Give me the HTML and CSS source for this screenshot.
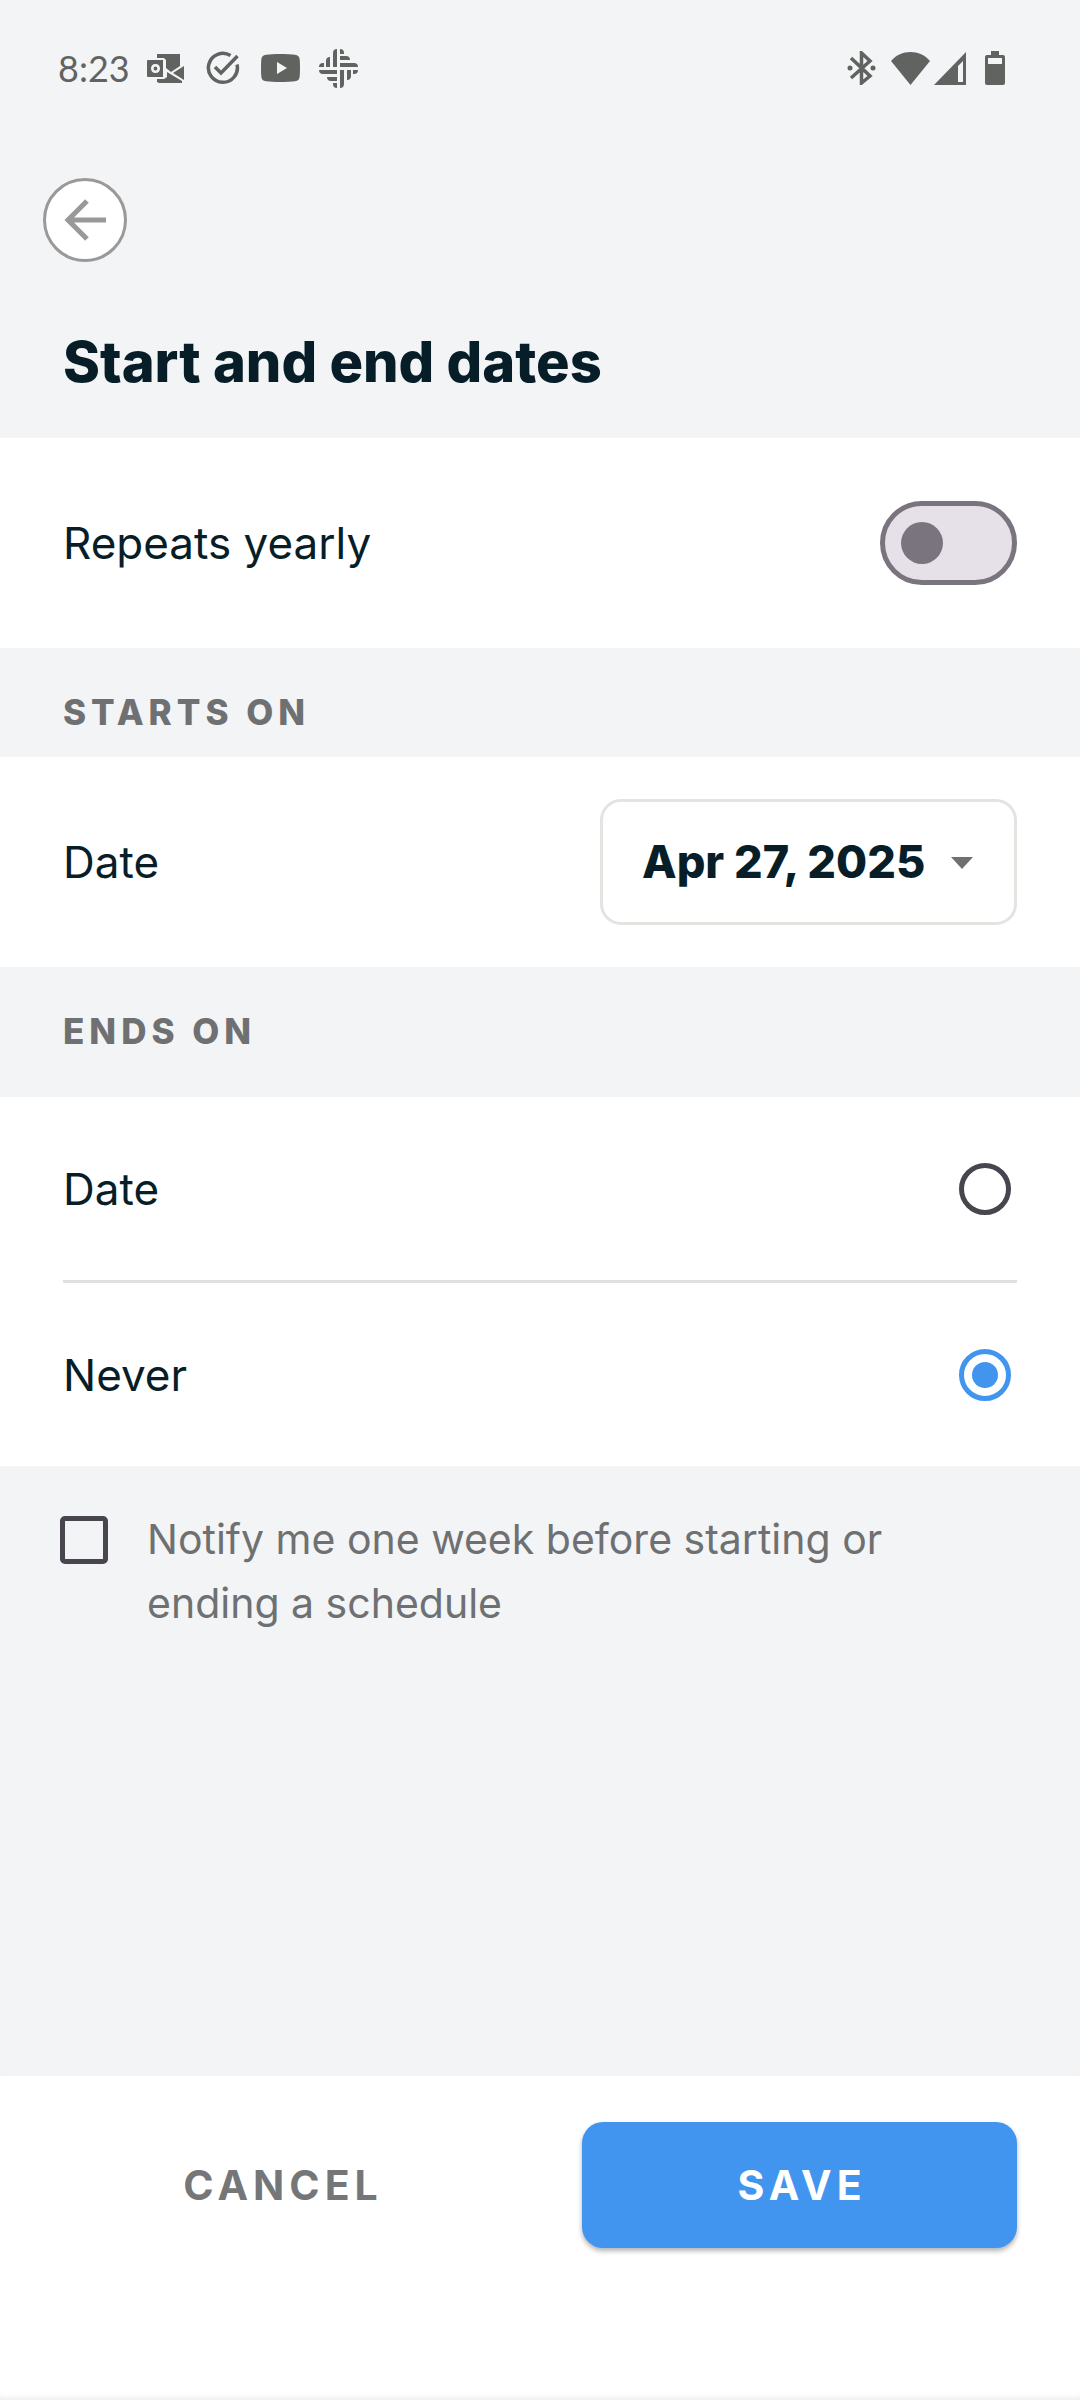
FILE: index.html
```
<!DOCTYPE html>
<html lang="en">
<head>
  <meta charset="utf-8">
  <meta name="viewport" content="width=device-width, initial-scale=1">
  <title>Start and end dates</title>
  <link rel="stylesheet" href="styles.css">
</head>
<body>
  <div class="screen">
    <div class="status-bar">
      <div class="status-group">
        <span class="clock">8:23</span>
        <svg class="icon-outlook" width="37" height="29" viewBox="0 0 37 29">
          <path d="M10 0h23v12l-9 6-5-4V6l-2-2h-7zM10 25h7l3-2v-5l15 9v2H12l-2-1z"/>
          <path d="M37 12v14l-11-7z"/>
          <path fill-rule="evenodd" d="M1 6h15v17H1a1 1 0 0 1-1-1V7a1 1 0 0 1 1-1zM8.500 10c-3 0-4.500 2-4.500 4.500S5.500 19 8.500 19s4.500-2 4.500-4.500S11.500 10 8.500 10zm0 2.500c1.300 0 1.800 1 1.800 2s-.5 2-1.800 2-1.800-1-1.800-2 .5-2 1.800-2z"/>
        </svg>
        <svg class="icon-task" width="34" height="34" viewBox="0 0 34 34" fill="none" stroke="#616361" stroke-width="3.500">
          <path d="M24.500 4.500A14.500 14.500 0 1 0 31 13.500"/>
          <path d="M9 16l6 6L31.500 5"/>
        </svg>
        <svg class="icon-video" width="39" height="28" viewBox="0 0 39 28">
          <path fill-rule="evenodd" d="M5 .7C12-.2 27-.2 34 .7c3 .3 4.400 1.800 4.700 4.800.4 5 .4 12 0 17-.3 3-1.700 4.500-4.700 4.800-7 .9-22 .9-29 0-3-.3-4.400-1.800-4.700-4.800-.4-5-.4-12 0-17C.6 2.500 2 1 5 .7zM16 8v12l10-6z"/>
        </svg>
        <svg class="icon-slack" width="39" height="39" viewBox="0 0 39 39">
          <g id="arm">
            <path d="M14 4a4 4 0 0 1 4-4v18h-4zM7 12a4 4 0 0 1 4-4v10H7zM0 18a4 4 0 0 1 4-4h1v4z"/>
          </g>
          <use href="#arm" transform="rotate(90 19.500 19.500)"/>
          <use href="#arm" transform="rotate(180 19.500 19.500)"/>
          <use href="#arm" transform="rotate(270 19.500 19.500)"/>
        </svg>
      </div>
      <div class="status-group">
        <svg class="icon-bluetooth" width="29" height="34" viewBox="0 0 29 34">
          <path d="M4 7l19 18-8.500 7V2L23 10 4 27" fill="none" stroke="#616361" stroke-width="3.500"/>
          <circle cx="3" cy="17" r="2.500"/>
          <circle cx="26" cy="17" r="2.500"/>
        </svg>
        <svg class="icon-wifi" width="39" height="33" viewBox="0 0 39 33">
          <path d="M0 9C5 3 12 0 19.500 0S34 3 39 9L19.500 33z"/>
        </svg>
        <svg class="icon-signal" width="32" height="33" viewBox="0 0 32 33">
          <path fill-rule="evenodd" d="M32 0v33H0zM29 9l-5 5v16h5z"/>
        </svg>
        <svg class="icon-battery" width="20" height="34" viewBox="0 0 20 34">
          <path fill-rule="evenodd" d="M6 0h8v4h4a2 2 0 0 1 2 2v26a2 2 0 0 1-2 2H2a2 2 0 0 1-2-2V6a2 2 0 0 1 2-2h4zM3 7v6h14V7z"/>
        </svg>
      </div>
    </div>

    <header class="header">
      <button class="back" type="button" aria-label="Back">
        <svg width="42" height="42" viewBox="0 0 42 42" fill="none" stroke="#999" stroke-width="5">
          <path d="M42 21H4M23 2L4 21l19 19"/>
        </svg>
      </button>
      <h1>Start and end dates</h1>
    </header>

    <form class="form">
      <div class="row">
        <label for="repeats">Repeats yearly</label>
        <input class="switch" id="repeats" type="checkbox" role="switch">
      </div>

      <h2 class="section-title">Starts on</h2>
      <div class="row">
        <label for="start">Date</label>
        <div class="select">
          <select id="start">
            <option>Apr 27, 2025</option>
          </select>
          <svg width="22" height="12" viewBox="0 0 22 12">
            <path d="M0 0h22L11 12z"/>
          </svg>
        </div>
      </div>

      <h2 class="section-title section-title-tall">Ends on</h2>
      <div class="options">
        <div class="option">
          <label for="end-date">Date</label>
          <input class="radio" id="end-date" type="radio" name="end">
        </div>
        <div class="option">
          <label for="end-never">Never</label>
          <input class="radio" id="end-never" type="radio" name="end" checked>
        </div>
      </div>

      <div class="notify">
        <input class="checkbox" id="notify" type="checkbox">
        <label for="notify">Notify me one week before starting or ending a schedule</label>
      </div>

      <div class="footer">
        <button class="btn" type="button">Cancel</button>
        <button class="btn btn-primary" type="submit">Save</button>
      </div>
    </form>
  </div>
</body>
</html>
```
FILE: styles.css
```
:root {
  --primary: #4295ef;
  --text: #071e29;
  --text-secondary: #6f7072;
  --status: #616361;
  --outline: #48454e;
  --background: #ffffff;
  --background-alt: #f3f4f6;
  --border: #e3e4e0;
}

* {
  margin: 0;
  padding: 0;
  box-sizing: border-box;
}

body {
  font-family: Inter, 'Liberation Sans', sans-serif;
  font-size: 44px;
  line-height: 64px;
  color: var(--text);
  background: var(--background-alt);
}

button,
select {
  font: inherit;
}

.screen {
  display: flex;
  flex-direction: column;
  min-height: 100vh;
}

/* Status bar */
.status-bar {
  display: flex;
  justify-content: space-between;
  align-items: center;
  height: 136px;
  padding: 0 75px 0 58px;
}

.status-group {
  display: flex;
  align-items: center;
  fill: var(--status);
}

.clock {
  font-family: Lato, 'Liberation Sans', sans-serif;
  font-size: 36px;
  color: var(--status);
}

.icon-outlook {
  margin-left: 17px;
}

.icon-task {
  margin-left: 22px;
}

.icon-video {
  margin-left: 21px;
}

.icon-slack {
  margin-left: 19px;
}

.icon-wifi {
  margin-left: 15px;
}

.icon-signal {
  margin-left: 4px;
}

.icon-battery {
  margin-left: 19px;
}

/* Header */
.header {
  padding: 42px 43px 44px;
}

.back {
  display: flex;
  align-items: center;
  justify-content: center;
  width: 84px;
  height: 84px;
  border: 3px solid #999;
  border-radius: 50%;
  background: var(--background);
}

h1 {
  margin-top: 68px;
  padding-left: 20px;
  font-size: 56px;
  font-weight: 800;
  line-height: 64px;
}

/* Form */
.form {
  flex: 1;
  display: flex;
  flex-direction: column;
}

.row {
  display: flex;
  align-items: center;
  justify-content: space-between;
  min-height: 210px;
  padding: 42px 63px;
  background: var(--background);
}

.section-title {
  padding: 32px 63px 13px;
  font-size: 35px;
  font-weight: 800;
  letter-spacing: 5px;
  text-transform: uppercase;
  color: var(--text-secondary);
}

.section-title-tall {
  padding-bottom: 34px;
}

.switch,
.radio,
.checkbox {
  appearance: none;
  flex-shrink: 0;
}

.switch {
  width: 137px;
  height: 84px;
  padding: 16px;
  border: 5px solid #79747e;
  border-radius: 42px;
  background: #e6e0e9;
}

.switch::before {
  content: '';
  display: block;
  width: 42px;
  height: 42px;
  border-radius: 50%;
  background: #79747e;
}

.switch:checked {
  border-color: var(--primary);
  background: var(--primary);
}

.switch:checked::before {
  margin-left: auto;
  background: var(--background);
}

.select {
  position: relative;
}

.select select {
  appearance: none;
  height: 126px;
  padding: 0 86px 0 39px;
  border: 3px solid var(--border);
  border-radius: 21px;
  font-size: 45px;
  font-weight: 800;
  color: var(--text);
  background: var(--background);
}

.select svg {
  position: absolute;
  top: 58px;
  right: 44px;
  fill: var(--text-secondary);
  pointer-events: none;
}

.options {
  padding: 0 63px;
  background: var(--background);
}

.option {
  display: flex;
  align-items: center;
  justify-content: space-between;
  min-height: 183px;
  padding-right: 6px;
}

.option + .option {
  min-height: 186px;
  border-top: 3px solid #e0e0e0;
}

.radio {
  width: 52px;
  height: 52px;
  padding: 8px;
  border: 5px solid var(--outline);
  border-radius: 50%;
}

.radio:checked {
  border-color: var(--primary);
  background: var(--primary) content-box;
}

.notify {
  display: flex;
  align-items: flex-start;
  gap: 39px;
  padding: 41px 160px 41px 60px;
}

.checkbox {
  width: 48px;
  height: 48px;
  margin-top: 9px;
  border: 5px solid var(--outline);
  border-radius: 5px;
}

.checkbox:checked {
  background: var(--outline);
}

.notify label {
  font-size: 41px;
  color: var(--text-secondary);
}

/* Footer */
.footer {
  display: flex;
  gap: 84px;
  margin-top: auto;
  padding: 46px 63px 152px;
  background: var(--background);
  box-shadow: inset 0 -6px 6px -4px rgba(0, 0, 0, 0.08);
}

.btn {
  flex: 1;
  height: 126px;
  padding-left: 5px;
  border: none;
  border-radius: 21px;
  font-size: 41px;
  font-weight: 700;
  letter-spacing: 5px;
  text-transform: uppercase;
  color: #757678;
  background: none;
}

.btn-primary {
  color: var(--background);
  background: var(--primary);
  box-shadow: 0 3px 5px rgba(0, 0, 0, 0.3);
}
```
